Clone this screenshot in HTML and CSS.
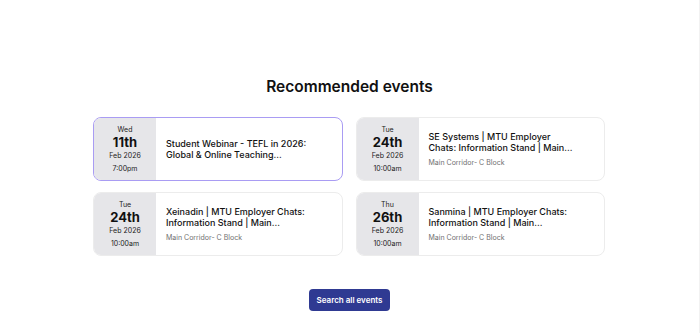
FILE: index.html
```html
<!DOCTYPE html>
<html lang="en">
<head>
  <meta charset="UTF-8">
  <meta name="viewport" content="width=device-width, initial-scale=1.0">
  <title>Recommended events</title>
  <link rel="stylesheet" href="styles.css">
</head>
<body>

  <section class="events">
    <h2>Recommended events</h2>

    <!-- Event cards -->
    <div class="event-grid">
      <a class="event-card active" href="#">
        <div class="event-date">
          <span class="day">Wed</span>
          <span class="num">11th</span>
          <span class="month">Feb 2026</span>
          <span class="time">7:00pm</span>
        </div>
        <div class="event-info">
          <div class="event-title">Student Webinar - TEFL in 2026: Global &amp; Online Teaching...</div>
        </div>
      </a>

      <a class="event-card" href="#">
        <div class="event-date">
          <span class="day">Tue</span>
          <span class="num">24th</span>
          <span class="month">Feb 2026</span>
          <span class="time">10:00am</span>
        </div>
        <div class="event-info">
          <div class="event-title">SE Systems | MTU Employer Chats: Information Stand | Main...</div>
          <div class="event-place">Main Corridor- C Block</div>
        </div>
      </a>

      <a class="event-card" href="#">
        <div class="event-date">
          <span class="day">Tue</span>
          <span class="num">24th</span>
          <span class="month">Feb 2026</span>
          <span class="time">10:00am</span>
        </div>
        <div class="event-info">
          <div class="event-title">Xeinadin | MTU Employer Chats: Information Stand | Main...</div>
          <div class="event-place">Main Corridor- C Block</div>
        </div>
      </a>

      <a class="event-card" href="#">
        <div class="event-date">
          <span class="day">Thu</span>
          <span class="num">26th</span>
          <span class="month">Feb 2026</span>
          <span class="time">10:00am</span>
        </div>
        <div class="event-info">
          <div class="event-title">Sanmina | MTU Employer Chats: Information Stand | Main...</div>
          <div class="event-place">Main Corridor- C Block</div>
        </div>
      </a>
    </div>

    <div class="actions">
      <a class="btn" href="#">Search all events</a>
    </div>
  </section>

</body>
</html>
```

FILE: styles.css
```css
/* Global */
* {
  margin: 0;
  padding: 0;
  box-sizing: border-box;
}

body {
  font-family: 'Inter', 'Liberation Sans', sans-serif;
  background: #fff;
  color: #111;
  border-right: 1px solid #f2f2f2;
  min-height: 100vh;
}

/* Section */
.events {
  padding-top: 77px;
  display: flex;
  flex-direction: column;
  align-items: center;
}

.events h2 {
  font-size: 15.5px;
  font-weight: 600;
  color: #111;
  margin-bottom: 21px;
}

/* Grid */
.event-grid {
  width: 512px;
  display: grid;
  grid-template-columns: 1fr 1fr;
  column-gap: 13px;
  row-gap: 11px;
  margin-left: -1px;
}

.event-card {
  display: flex;
  height: 64px;
  border: 1px solid #ececec;
  border-radius: 8px;
  overflow: hidden;
  text-decoration: none;
  color: inherit;
  background: #fff;
}

.event-card.active {
  border-color: #a99cf3;
}

.event-date {
  width: 62px;
  flex-shrink: 0;
  background: #e6e6e9;
  display: flex;
  flex-direction: column;
  align-items: center;
  justify-content: center;
  color: #222;
}

.event-date .day {
  font-size: 7px;
  line-height: 9px;
}

.event-date .num {
  font-size: 13px;
  font-weight: 700;
  line-height: 17px;
  color: #111;
}

.event-date .month {
  font-size: 7px;
  line-height: 10px;
  margin-bottom: 3px;
}

.event-date .time {
  font-size: 7px;
  line-height: 9px;
}

.event-info {
  flex: 1;
  padding: 0 30px 0 10px;
  display: flex;
  flex-direction: column;
  justify-content: center;
}

.event-title {
  font-size: 9px;
  font-weight: 500;
  line-height: 11px;
  color: #111;
}

.event-place {
  font-size: 7px;
  color: #707070;
  margin-top: 5px;
}

/* Button */
.actions {
  margin-top: 31px;
}

.btn {
  display: inline-block;
  background: #2f3a92;
  color: #fff;
  font-size: 8px;
  font-weight: 600;
  padding: 6px 8px;
  border-radius: 4px;
  text-decoration: none;
}
```
